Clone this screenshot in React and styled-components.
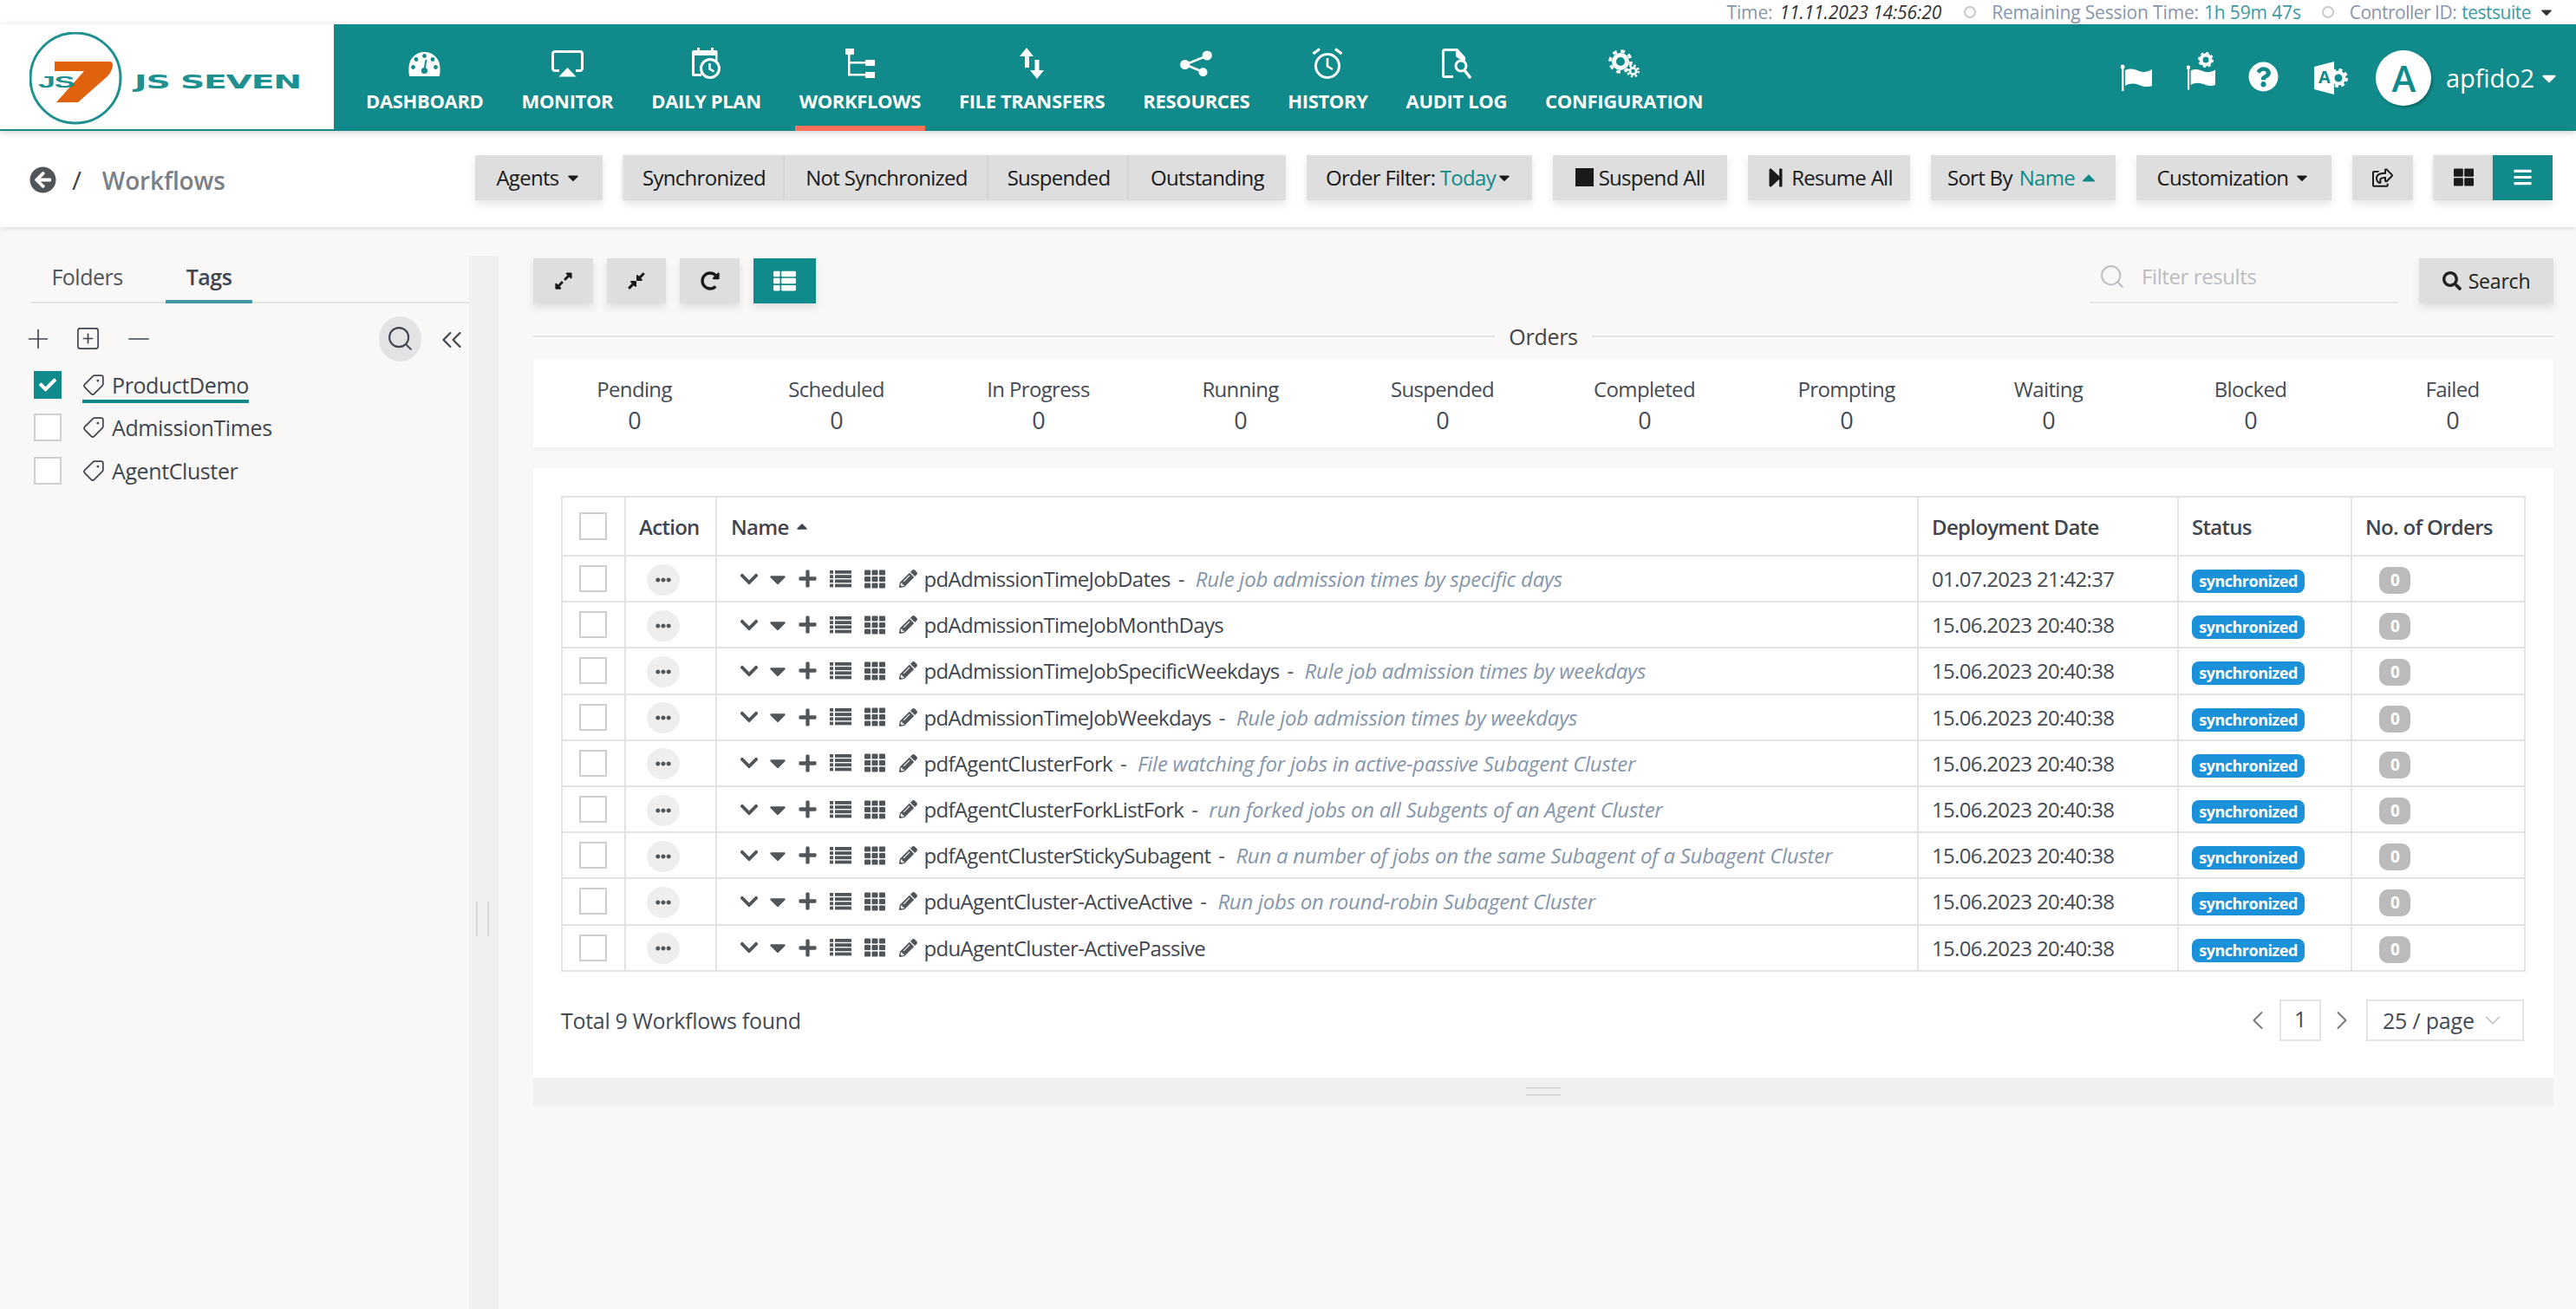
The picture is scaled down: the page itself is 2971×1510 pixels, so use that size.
import React from "react";
import styled, { createGlobalStyle } from "styled-components";
import {
  FaArrowCircleLeft, FaCaretDown, FaCaretUp, FaChevronDown, FaCompressAlt, FaEllipsisH,
  FaExpandAlt, FaPencilAlt, FaPlus, FaQuestionCircle, FaRedoAlt, FaRegShareSquare,
  FaSquareFull, FaStepForward, FaTh, FaThLarge, FaThList, FaBars, FaCheck, FaSearch,
} from "react-icons/fa";
import { LuChevronDown, LuChevronLeft, LuChevronRight, LuChevronsLeft, LuMinus, LuPlus, LuSearch, LuSquarePlus, LuTag } from "react-icons/lu";

const TEAL = "#108a8a";
const FONT = '"Open Sans", "Noto Sans", sans-serif';

const Global = createGlobalStyle`
  html, body { margin: 0; padding: 0; height: 100%; overflow: hidden; background: #f9f8f6; }
  body { font-family: ${FONT}; color: #3f4650; }
  #root { height: 100%; }
  * { box-sizing: border-box; }
`;

const Page = styled.div`
  width: 2971px; height: 1510px; display: flex; flex-direction: column; overflow: hidden;
  font-size: 24px; letter-spacing: -0.7px;
`;

const StatusBar = styled.div`
  height: 28px; background: #fff; display: flex; justify-content: flex-end; align-items: center;
  padding-right: 24px; font-size: 21px; color: #8796ab; white-space: nowrap;
`;
const StatusItem = styled.span`
  display: inline-flex; align-items: center; gap: ${(p) => p.$gap ?? 6}px;
  margin-left: ${(p) => p.$ml || 0}px; letter-spacing: ${(p) => p.$ls}px;
`;
const Dot = styled.i`
  width: 14px; height: 14px; border: 2px solid #c9c9c9; border-radius: 50%; margin-right: 12px; display: inline-block;
`;
const DateValue = styled.em`color: #333;`;
const TealValue = styled.span`color: #3f9aa3;`;
const TinyCaret = styled.span`display: inline-flex; color: #333; margin-left: 2px; font-size: 20px;`;

const Nav = styled.header`
  height: 123px; background: ${TEAL}; display: flex; position: relative; z-index: 3;
  box-shadow: 0 2px 8px rgba(0,0,0,.18);
`;
const LogoBox = styled.div`
  width: 385px; background: #fff; border-bottom: 2px solid ${TEAL}; padding: 9px 0 0 34px; flex: none;
`;
const NavList = styled.nav`display: flex; padding-left: 15px; flex: 1;`;
const NavItem = styled.a`
  display: flex; flex-direction: column; align-items: center; padding: 27px 5px 0; margin: 0 17px;
  color: #fff; font-weight: 700; font-size: 22px; letter-spacing: -0.35px; white-space: nowrap; height: 123px;
  border-bottom: 6px solid ${(p) => (p.$active ? "#ff7058" : "transparent")};
`;
const NavIcon = styled.span`
  height: 36px; margin-bottom: 10px; display: flex; align-items: center; justify-content: center; color: #fff;
`;
const NavRight = styled.div`
  display: flex; align-items: center; padding-right: 18px; flex: none; color: #fff;
`;
const HeadIcon = styled.span`display: flex; margin-left: ${(p) => p.$ml}px; margin-top: ${(p) => p.$mt || 0}px;`;
const Avatar = styled.span`
  width: 64px; height: 64px; border-radius: 50%; background: #fff; color: ${TEAL}; margin-left: 32px;
  display: flex; align-items: center; justify-content: center; font-size: 42px; font-weight: 600;
  box-shadow: 2px 2px 3px rgba(0,0,0,.25);
`;
const UserName = styled.span`font-size: 29px; margin-left: 17px; letter-spacing: -0.1px;`;
const UserCaret = styled.span`display: flex; margin-left: 4px; font-size: 26px;`;

const SubHeader = styled.div`
  height: 111px; background: #fff; display: flex; align-items: center; gap: 24px; padding: 0 27px 4px 34px;
  box-shadow: 0 2px 5px rgba(0,0,0,.1); position: relative; z-index: 2;
`;
const Crumb = styled.div`
  flex: 1; display: flex; align-items: center; color: #50555a; font-size: 28px; letter-spacing: -0.15px; padding-top: 6px;
`;
const CrumbSep = styled.span`margin: 0 24px 0 18px; color: #444; font-size: 30px;`;
const CrumbLabel = styled.span`color: #7b7f86; font-weight: 600;`;

const Btn = styled.button`
  height: 52px; width: ${(p) => p.$w}px; border: 0; padding: 0; background: ${(p) => (p.$on ? TEAL : "#dedede")};
  color: ${(p) => (p.$on ? "#fff" : "#1a1a1a")}; font: inherit; letter-spacing: inherit;
  display: inline-flex; align-items: center; justify-content: center; gap: ${(p) => p.$gap ?? 6}px; white-space: nowrap; flex: none;
  box-shadow: 0 5px 9px rgba(0,0,0,.1);
`;
const Group = styled.div`display: flex; box-shadow: 0 5px 9px rgba(0,0,0,.1);`;
const GroupBtn = styled(Btn)`box-shadow: -2px 0 2px rgba(0,0,0,.05);`;
const Accent = styled.span`color: ${TEAL};`;
const AccentIcon = styled.span`display: inline-flex; color: ${TEAL}; font-size: 24px; margin-left: -4px;`;

const Body = styled.div`flex: 1; display: flex; min-height: 0;`;
const Side = styled.aside`width: 541px; flex: none; padding-top: 33px;`;
const Tabs = styled.div`
  margin-left: 35px; height: 55px; display: flex; gap: 25px; border-bottom: 2px solid #e3e3e3; font-size: 25px; letter-spacing: -0.5px; color: #50555a;
`;
const Tab = styled.div`
  width: ${(p) => p.$w}px; height: 55px; padding-top: 7px; text-align: center;
  font-weight: ${(p) => (p.$on ? 600 : 400)}; color: ${(p) => (p.$on ? "#3f4650" : "#50555a")};
  border-bottom: ${(p) => (p.$on ? "4px solid #4098a8" : "0")};
`;
const SideTools = styled.div`
  height: 69px; display: flex; align-items: center; padding: 12px 1px 0 26px; color: #3f4650;
`;
const ToolIcon = styled.span`display: flex; margin-right: ${(p) => p.$mr || 0}px; margin-top: ${(p) => p.$mt || 0}px;`;
const Spacer = styled.span`flex: 1;`;
const RoundSearch = styled.span`
  width: 49px; height: 52px; border-radius: 50%; background: #e3e3e6; display: flex; align-items: center; justify-content: center; margin-right: 16px;
`;
const TagRow = styled.div`display: flex; align-items: center; height: 49.5px; padding-left: 39px;`;
const Check = styled.span`
  width: 32px; height: ${(p) => p.$h || 32}px; flex: none; display: flex; align-items: center; justify-content: center;
  background: ${(p) => (p.$on ? TEAL : "#fff")}; border: ${(p) => (p.$on ? "0" : "2px solid #cfcfcf")}; color: #fff; font-size: 20px;
`;
const TagLabel = styled.span`
  margin-left: 24px; display: inline-flex; align-items: center; gap: 8px; height: 38px; margin-top: ${(p) => (p.$on ? 4 : 0)}px;
  border-bottom: ${(p) => (p.$on ? `4px solid ${TEAL}` : "0")};
  font-size: 25px; letter-spacing: -0.4px;
`;
const TagGlyph = styled(LuTag)`transform: scaleX(-1); flex: none;`;

const Divider = styled.div`
  width: 34px; flex: none; margin-top: 33px; background: #f0f0f0; position: relative;
`;
const DividerHandle = styled.span`
  position: absolute; left: 8px; top: 745px; width: 15px; height: 40px; border-left: 2px solid #d8d8d8; border-right: 2px solid #d8d8d8;
`;

const Main = styled.main`flex: 1; min-width: 0; padding: 36px 26px 0 40px;`;
const Toolbar = styled.div`display: flex; align-items: center; gap: 16px; height: 52px;`;
const FilterBox = styled.div`
  width: 355px; height: 52px; border-bottom: 2px solid #e6e6e6; display: flex; align-items: center; gap: 18px; padding: 0 0 9px 10px; color: #b9bdc2;
  margin-right: 9px; font-size: 24px; letter-spacing: -0.4px;
`;
const SearchText = styled.span`font-size: 23px; color: #222; letter-spacing: -0.2px;`;
const OrdersTitle = styled.div`
  height: 64px; padding-top: 12px; display: flex; align-items: center; gap: 16px; font-size: 25px; color: #444; letter-spacing: -0.3px;
  &::before, &::after { content: ""; flex: 1; height: 2px; background: #e3e3e3; }
`;
const StatsCard = styled.section`
  height: 102px; background: #fff; display: grid; grid-template-columns: repeat(10, 1fr); box-shadow: 0 2px 4px rgba(0,0,0,.04);
`;
const Stat = styled.div`display: flex; flex-direction: column; align-items: center; padding-top: 19px; color: #444b55;`;
const StatLabel = styled.span`font-size: 24px; line-height: 32px; letter-spacing: -0.65px;`;
const StatValue = styled.span`font-size: 27px; line-height: 40px;`;

const TableCard = styled.section`
  margin-top: 24px; background: #fff; padding: 32px 34px 0 32px; height: 703px; display: flex; flex-direction: column;
`;
const Grid = styled.table`
  width: 2264px; border-collapse: collapse; table-layout: fixed; border: 2px solid #e3e3e3;
`;
const Th = styled.th`
  height: 68px; border: 2px solid #e3e3e3; text-align: left; padding: 0 0 0 ${(p) => p.$pl ?? 15}px; font-weight: 600; color: #3f4650;
`;
const Td = styled.td`
  height: 53.2px; border: 2px solid #e3e3e3; padding: 0 0 0 ${(p) => p.$pl ?? 15}px; white-space: nowrap; color: #444b55;
`;
const Dots = styled.span`
  width: 38px; height: 36px; border-radius: 50%; background: #eeeeee; color: #50555a; display: flex; align-items: center; justify-content: center; font-size: 18px; margin-top: 2px;
`;
const NameCell = styled.div`display: flex; align-items: center; color: #50555a;`;
const RowIcon = styled.span`display: inline-flex; flex: none; margin-right: ${(p) => p.$mr}px; font-size: ${(p) => p.$s}px; color: #50555a;`;
const WfName = styled.span`color: #3f4650;`;
const Sep = styled.span`margin: 0 13px 0 9px; color: #555;`;
const Desc = styled.em`color: #8596ab; letter-spacing: -0.25px; font-size: 24px;`;
const StatusBadge = styled.span`
  display: block; width: 130px; height: 27px; line-height: 27px; text-align: center; border-radius: 8px; background: #1a91d9; color: #fff;
  font-size: 18px; font-weight: 700; letter-spacing: -0.5px; margin-top: 6px;
`;
const ZeroBadge = styled.span`
  display: block; width: 36px; height: 31px; line-height: 31px; text-align: center; border-radius: 10px; background: #bbb; color: #fff;
  font-size: 19px; font-weight: 700; margin: 4px 0 0 16px;
`;
const Footer = styled.div`display: flex; align-items: center; margin-top: 32px; height: 48px; font-size: 25px; color: #444b55; letter-spacing: -0.3px;`;
const PageArrow = styled.span`display: flex; color: #777; margin: ${(p) => p.$m};`;
const PageBox = styled.span`
  width: 48px; height: 48px; border: 2px solid #e3e3e3; display: flex; align-items: center; justify-content: center; padding-bottom: 4px;
`;
const PageSize = styled.span`
  width: 182px; height: 48px; border: 2px solid #e3e3e3; display: flex; align-items: center; padding-left: 17px; gap: 6px; letter-spacing: -0.2px;
`;
const Strip = styled.div`
  height: 31px; background: #f0f0f0; display: flex; justify-content: center; padding-top: 11px; box-shadow: 0 2px 3px rgba(0,0,0,.03);
`;
const StripHandle = styled.span`width: 40px; height: 10px; border-top: 2px solid #d8d8d8; border-bottom: 2px solid #d8d8d8;`;

const Logo = () => (
  <svg width="330" height="110" viewBox="0 0 330 110">
    <ellipse cx="53" cy="53" rx="52" ry="52" fill="none" stroke="#1e9090" strokeWidth="3" />
    <path d="M29 34 H92 Q96 34 96 38 Q96 44 90 51 L56 81 H31 L63 45 H29 Z" fill="#e0620f" />
    <text x="10" y="64" fontFamily="Liberation Sans" fontWeight="700" fontSize="18" fill="#1e9090" textLength="41" lengthAdjust="spacingAndGlyphs">JS</text>
    <text x="121" y="65" fontFamily="DejaVu Sans" fontWeight="700" fontSize="22" fill="#1e9090" textLength="192" lengthAdjust="spacingAndGlyphs">JS SEVEN</text>
  </svg>
);
const GaugeIcon = () => (
  <svg width="37" height="30" viewBox="0 0 37 30" style={{ marginTop: 1 }}>
    <path d="M1.5 29 C0 26 .5 23 .5 19 A18 18 0 0 1 36.5 19 C36.5 23 37 26 35.5 29 Z" fill="#fff" />
    <g fill={TEAL}>
      <circle cx="18.5" cy="5.5" r="2.4" /><circle cx="9" cy="9.5" r="2.4" /><circle cx="28" cy="9.5" r="2.4" />
      <circle cx="5.5" cy="18.5" r="2.4" /><circle cx="31.5" cy="18.5" r="2.4" /><circle cx="18.5" cy="22.5" r="3.6" />
    </g>
    <path d="M18.5 22 L20.5 10" stroke={TEAL} strokeWidth="2" />
  </svg>
);
const AirplayIcon = () => (
  <svg width="37" height="31" viewBox="0 0 37 31">
    <path d="M9 23.5 H4 A2.5 2.5 0 0 1 1.5 21 V4 A2.5 2.5 0 0 1 4 1.5 H33 A2.5 2.5 0 0 1 35.5 4 V21 A2.5 2.5 0 0 1 33 23.5 H28" fill="none" stroke="#fff" strokeWidth="3" />
    <path d="M18.5 20 L28.5 30.5 H8.5 Z" fill="#fff" />
  </svg>
);
const CalendarIcon = () => (
  <svg width="33" height="36" viewBox="0 0 33 36">
    <path d="M6 0 H9 V3 H22 V0 H25 V3 H27 A2 2 0 0 1 29.5 5 V15 H27 V9 H3 V30 H11 V33 H2 A2 2 0 0 1 0 31 V5 A2 2 0 0 1 2 3 H6 Z" fill="#fff" />
    <circle cx="21" cy="24" r="10.5" fill={TEAL} stroke="#fff" strokeWidth="3" />
    <path d="M20.5 18 V24.5 L25.5 27.5" fill="none" stroke="#fff" strokeWidth="2.6" />
  </svg>
);
const TreeIcon = () => (
  <svg width="34" height="34" viewBox="0 0 34 34">
    <g fill="#fff">
      <rect x="0" y="0" width="10" height="7" /><rect x="23" y="13" width="11" height="7" /><rect x="23" y="27" width="11" height="7" />
      <rect x="3" y="7" width="2.5" height="24" /><rect x="3" y="15" width="20" height="2.5" /><rect x="3" y="29" width="20" height="2.5" />
    </g>
  </svg>
);
const TransferIcon = () => (
  <svg width="28" height="36" viewBox="0 0 28 36">
    <path d="M8 0 L16 10 H11 V23 H6 V10 H0 Z M20 36 L12 26 H17.5 V14 H22.5 V26 H28 Z" fill="#fff" />
  </svg>
);
const ShareIcon = () => (
  <svg width="37" height="31" viewBox="0 0 37 31">
    <path d="M31 6.5 L6 16.5 L26.5 25" fill="none" stroke="#fff" strokeWidth="2.6" />
    <circle cx="31.2" cy="6" r="5.6" fill="#fff" /><circle cx="5.7" cy="16.5" r="5.6" fill="#fff" /><circle cx="26.5" cy="25.3" r="5" fill="#fff" />
  </svg>
);
const AlarmIcon = () => (
  <svg width="36" height="36" viewBox="0 0 36 36">
    <circle cx="18" cy="21" r="13.5" fill="none" stroke="#fff" strokeWidth="3" />
    <path d="M18 12 V21.5 L24 25" fill="none" stroke="#fff" strokeWidth="2.6" />
    <path d="M1.5 7 L9 1.5 M34.5 7 L27 1.5" fill="none" stroke="#fff" strokeWidth="3.4" />
  </svg>
);
const AuditIcon = () => (
  <svg width="34" height="35" viewBox="0 0 34 35">
    <path d="M18 1.5 H3 A1.5 1.5 0 0 0 1.5 3 V31 A1.5 1.5 0 0 0 3 32.5 H13" fill="none" stroke="#fff" strokeWidth="3" />
    <path d="M18 0 L27 10 V15 H24 L16 9 V0 Z" fill="#fff" />
    <circle cx="22" cy="20" r="6" fill="none" stroke="#fff" strokeWidth="3" />
    <path d="M26 25 L33 34" stroke="#fff" strokeWidth="3.5" />
  </svg>
);
const CogsIcon = () => (
  <svg width="36" height="33" viewBox="0 0 36 33">
    <g fill="none" stroke="#fff">
      <circle cx="14" cy="14" r="7.5" strokeWidth="5" />
      <circle cx="14" cy="14" r="12" strokeWidth="3.6" strokeDasharray="4.7 4.72" />
      <circle cx="28.5" cy="25" r="3.6" strokeWidth="2.6" />
      <circle cx="28.5" cy="25" r="6.2" strokeWidth="2.6" strokeDasharray="2.4 2.47" />
    </g>
  </svg>
);
const FlagIcon = ({ gear }) => (
  <svg width={gear ? 33 : 36} height={gear ? 46 : 31} viewBox={gear ? "0 0 33 46" : "0 0 36 31"}>
    <g transform={gear ? "translate(0 15) scale(.92)" : undefined}>
      <circle cx="2" cy="3" r="2.5" fill="#fff" /><rect x="1" y="3" width="2.4" height="28" fill="#fff" />
      <path d="M5 7 C12 4 16 6 21 8 C26 10 31 9 36 6 V25 C30 27 26 26 21 24 C15 22 10 22 5 25 Z" fill="#fff" />
    </g>
    {gear && <circle cx="22" cy="9" r="5.5" fill="none" stroke="#fff" strokeWidth="4" />}
    {gear && <circle cx="22" cy="9" r="7.5" fill="none" stroke="#fff" strokeWidth="3" strokeDasharray="3 2.9" />}
  </svg>
);
const LangIcon = () => (
  <svg width="39" height="38" viewBox="0 0 39 38">
    <path d="M0 6 L23 0 V38 L0 32 Z" fill="#fff" />
    <text x="11.5" y="25" textAnchor="middle" fontFamily="Open Sans" fontWeight="700" fontSize="20" fill={TEAL}>A</text>
    <circle cx="28" cy="19" r="6.5" fill="none" stroke="#fff" strokeWidth="4" />
    <circle cx="28" cy="19" r="9.5" fill="none" stroke="#fff" strokeWidth="3" strokeDasharray="4 3.5" />
    <rect x="19" y="6" width="4" height="26" fill="#fff" />
  </svg>
);
const ListIcon = () => (
  <svg width="25" height="20" viewBox="0 0 25 20" fill="#50555a">
    {[0, 5.2, 10.4, 15.6].map((y) => (
      <g key={y}><rect x="0" y={y} width="4" height="3.8" /><rect x="6" y={y} width="19" height="3.8" /></g>
    ))}
  </svg>
);

const navItems = [
  ["DASHBOARD", <GaugeIcon />], ["MONITOR", <AirplayIcon />], ["DAILY PLAN", <CalendarIcon />], ["WORKFLOWS", <TreeIcon />, true],
  ["FILE TRANSFERS", <TransferIcon />], ["RESOURCES", <ShareIcon />], ["HISTORY", <AlarmIcon />],
  ["AUDIT LOG", <AuditIcon />], ["CONFIGURATION", <CogsIcon />],
];
const counts = ["Pending", "Scheduled", "In Progress", "Running", "Suspended", "Completed", "Prompting", "Waiting", "Blocked", "Failed"];
const rows = [
  ["pdAdmissionTimeJobDates", "Rule job admission times by specific days", "01.07.2023 21:42:37"],
  ["pdAdmissionTimeJobMonthDays", "", "15.06.2023 20:40:38"],
  ["pdAdmissionTimeJobSpecificWeekdays", "Rule job admission times by weekdays", "15.06.2023 20:40:38"],
  ["pdAdmissionTimeJobWeekdays", "Rule job admission times by weekdays", "15.06.2023 20:40:38"],
  ["pdfAgentClusterFork", "File watching for jobs in active-passive Subagent Cluster", "15.06.2023 20:40:38"],
  ["pdfAgentClusterForkListFork", "run forked jobs on all Subgents of an Agent Cluster", "15.06.2023 20:40:38"],
  ["pdfAgentClusterStickySubagent", "Run a number of jobs on the same Subagent of a Subagent Cluster", "15.06.2023 20:40:38"],
  ["pduAgentCluster-ActiveActive", "Run jobs on round-robin Subagent Cluster", "15.06.2023 20:40:38"],
  ["pduAgentCluster-ActivePassive", "", "15.06.2023 20:40:38"],
];
const tags = [["ProductDemo", true], ["AdmissionTimes", false], ["AgentCluster", false]];

export default function App() {
  return (
    <Page>
      <Global />
      <StatusBar>
        <StatusItem $ls={-0.1} $gap={8}>Time: <DateValue>11.11.2023 14:56:20</DateValue></StatusItem>
        <StatusItem $ml={26} $ls={-0.15}><Dot />Remaining Session Time: <TealValue>1h 59m 47s</TealValue></StatusItem>
        <StatusItem $ml={24} $ls={-0.5}><Dot />Controller ID: <TealValue>testsuite</TealValue><TinyCaret><FaCaretDown /></TinyCaret></StatusItem>
      </StatusBar>
      <Nav>
        <LogoBox><Logo /></LogoBox>
        <NavList>
          {navItems.map(([label, icon, active]) => (
            <NavItem key={label} $active={active}><NavIcon>{icon}</NavIcon>{label}</NavItem>
          ))}
        </NavList>
        <NavRight>
          <HeadIcon $ml={0}><FlagIcon /></HeadIcon>
          <HeadIcon $ml={40} $mt={-13}><FlagIcon gear /></HeadIcon>
          <HeadIcon $ml={38} $mt={-2}><FaQuestionCircle size={35} /></HeadIcon>
          <HeadIcon $ml={41}><LangIcon /></HeadIcon>
          <Avatar>A</Avatar>
          <UserName>apfido2</UserName>
          <UserCaret><FaCaretDown /></UserCaret>
        </NavRight>
      </Nav>
      <SubHeader>
        <Crumb><FaArrowCircleLeft size={31} /><CrumbSep>/</CrumbSep><CrumbLabel>Workflows</CrumbLabel></Crumb>
        <Btn $w={147}>Agents <FaCaretDown size={20} /></Btn>
        <Group>
          <GroupBtn $w={186}>Synchronized</GroupBtn>
          <GroupBtn $w={235}>Not Synchronized</GroupBtn>
          <GroupBtn $w={162}>Suspended</GroupBtn>
          <GroupBtn $w={181}>Outstanding</GroupBtn>
        </Group>
        <Btn $w={260} $gap={0}>Order Filter:&nbsp;<Accent>Today</Accent><FaCaretDown size={20} /></Btn>
        <Btn $w={201}><FaSquareFull size={21} />Suspend All</Btn>
        <Btn $w={187}><FaStepForward size={24} />Resume All</Btn>
        <Btn $w={213} $gap={8}>Sort By <Accent>Name</Accent><AccentIcon><FaCaretUp /></AccentIcon></Btn>
        <Btn $w={225}>Customization <FaCaretDown size={20} /></Btn>
        <Btn $w={70}><FaRegShareSquare size={24} /></Btn>
        <Group>
          <GroupBtn $w={68}><FaThLarge size={23} /></GroupBtn>
          <GroupBtn $w={69} $on><FaBars size={23} /></GroupBtn>
        </Group>
      </SubHeader>
      <Body>
        <Side>
          <Tabs>
            <Tab $w={131}>Folders</Tab>
            <Tab $w={100} $on>Tags</Tab>
          </Tabs>
          <SideTools>
            <ToolIcon $mr={24}><LuPlus size={36} strokeWidth={1.1} /></ToolIcon>
            <ToolIcon $mr={24}><LuSquarePlus size={31} strokeWidth={1.3} /></ToolIcon>
            <ToolIcon><LuMinus size={38} strokeWidth={1.1} /></ToolIcon>
            <Spacer />
            <RoundSearch><LuSearch size={33} strokeWidth={1.5} /></RoundSearch>
            <ToolIcon $mt={2}><LuChevronsLeft size={38} strokeWidth={1.4} /></ToolIcon>
          </SideTools>
          {tags.map(([t, on]) => (
            <TagRow key={t}>
              <Check $on={on}>{on && <FaCheck />}</Check>
              <TagLabel $on={on}><TagGlyph size={26} strokeWidth={1.6} />{t}</TagLabel>
            </TagRow>
          ))}
        </Side>
        <Divider><DividerHandle /></Divider>
        <Main>
          <Toolbar>
            <Btn $w={69}><FaExpandAlt size={22} /></Btn>
            <Btn $w={68}><FaCompressAlt size={22} /></Btn>
            <Btn $w={69}><FaRedoAlt size={22} /></Btn>
            <Btn $w={72} $on><FaThList size={26} /></Btn>
            <Spacer />
            <FilterBox><LuSearch size={32} strokeWidth={1.4} />Filter results</FilterBox>
            <Btn $w={155} $gap={8}><FaSearch size={22} color="#222" /><SearchText>Search</SearchText></Btn>
          </Toolbar>
          <OrdersTitle>Orders</OrdersTitle>
          <StatsCard>
            {counts.map((c) => (
              <Stat key={c}><StatLabel>{c}</StatLabel><StatValue>0</StatValue></Stat>
            ))}
          </StatsCard>
          <TableCard>
            <Grid>
              <colgroup>
                <col width="73" /><col width="105" /><col width="1386" /><col width="300" /><col width="200" /><col width="200" />
              </colgroup>
              <thead>
                <tr>
                  <Th $pl={19}><Check /></Th>
                  <Th $pl={15}>Action</Th>
                  <Th $pl={16}>Name <FaCaretUp size={20} /></Th>
                  <Th>Deployment Date</Th>
                  <Th>Status</Th>
                  <Th>No. of Orders</Th>
                </tr>
              </thead>
              <tbody>
                {rows.map(([name, desc, date]) => (
                  <tr key={name}>
                    <Td $pl={19}><Check $h={31} /></Td>
                    <Td $pl={24}><Dots><FaEllipsisH /></Dots></Td>
                    <Td $pl={25}>
                      <NameCell>
                        <RowIcon $s={24} $mr={5.5}><FaChevronDown /></RowIcon>
                        <RowIcon $s={30} $mr={8.5}><FaCaretDown /></RowIcon>
                        <RowIcon $s={23} $mr={13.5}><FaPlus /></RowIcon>
                        <RowIcon $s={20} $mr={15}><ListIcon /></RowIcon>
                        <RowIcon $s={24} $mr={16}><FaTh /></RowIcon>
                        <RowIcon $s={21} $mr={8}><FaPencilAlt /></RowIcon>
                        <WfName>{name}</WfName>
                        {desc && <Sep>-</Sep>}
                        {desc && <Desc>{desc}</Desc>}
                      </NameCell>
                    </Td>
                    <Td>{date}</Td>
                    <Td><StatusBadge>synchronized</StatusBadge></Td>
                    <Td><ZeroBadge>0</ZeroBadge></Td>
                  </tr>
                ))}
              </tbody>
            </Grid>
            <Footer>
              Total 9 Workflows found
              <Spacer />
              <PageArrow $m="0 7px 0 0"><LuChevronLeft size={36} strokeWidth={1.3} /></PageArrow>
              <PageBox>1</PageBox>
              <PageArrow $m="0 10px 0 6px"><LuChevronRight size={36} strokeWidth={1.3} /></PageArrow>
              <PageSize>25 / page<LuChevronDown size={30} strokeWidth={1} color="#b9b9b9" /></PageSize>
            </Footer>
          </TableCard>
          <Strip><StripHandle /></Strip>
        </Main>
      </Body>
    </Page>
  );
}
